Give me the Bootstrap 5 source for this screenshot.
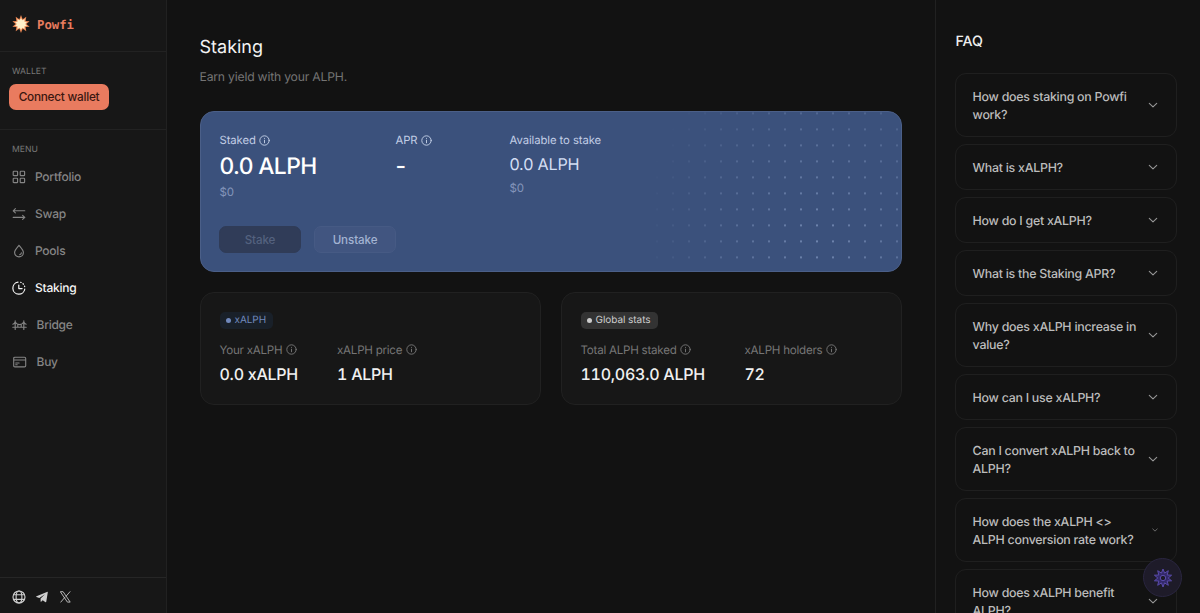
<!DOCTYPE html>
<html lang="en">
<head>
<meta charset="utf-8">
<title>Powfi – Staking</title>
<meta name="viewport" content="width=device-width, initial-scale=1">
<link rel="stylesheet" href="https://cdn.jsdelivr.net/npm/bootstrap@5.3.0/dist/css/bootstrap.min.css">
<style>
body{font-family:Inter,"Liberation Sans",sans-serif;font-size:12.4px;line-height:18px;background:#121212;color:#e8e8e8;text-rendering:geometricPrecision}
h1,h2,p{margin:0}
svg{display:block;flex:none}
.ln{fill:none;stroke:currentColor;stroke-linecap:round;stroke-linejoin:round}
.side{width:167px;flex:none;background:#171717;border-right:1px solid #212121}
.brand{height:51.5px;border-bottom:1px solid #222;padding:0 0 2px 12px;gap:7px;font:700 12.3px/18px "DejaVu Sans Mono","Liberation Mono",monospace;color:#e87c5f}
.brand span{padding-top:2px}
.wallet{height:78.5px;border-bottom:1px solid #222;padding:14px 0 0 9px}
.cap{font-size:8.6px;line-height:12px;letter-spacing:.05px;color:#777;margin-left:3px}
.btn-connect{width:100px;height:26px;padding:0;border:0;border-radius:7px;background:#e97b5f;color:#3a1710;font-size:11.8px;letter-spacing:-.25px;font-weight:500;margin-top:6.5px;display:block;line-height:26px}
.menu{padding:14.4px 0 0 9px}
.menu .cap{margin-bottom:2.6px}
.item{height:36.85px;gap:9px;padding-left:3px;color:#858585;font-weight:500;font-size:12px;letter-spacing:-.25px}
.item.on{color:#f5f5f5}
.item.wide span{margin-left:1.5px}
.foot{height:36px;border-top:1px solid #262626;padding:3px 0 0 12px;gap:8px;color:#cfcfcf}
.main{width:768px;flex:none;padding:35px 33.5px 0 32.5px}
.ttl{font-size:18px;line-height:24px;font-weight:400;color:#f4f4f4;padding-top:1px}
.sub{color:#747474;margin-top:8px;font-size:12.2px;letter-spacing:-.2px}
.hero{height:161px;margin-top:25px;border:1px solid #4b5f88;border-radius:14px;background:#3b517c;padding:19px 19px 18px;overflow:hidden;position:relative}
.dots{position:absolute;right:0;top:0;width:270px;height:159px;
 background-image:radial-gradient(circle,#92a7cf 0,#92a7cf .7px,transparent 1.5px);background-size:16px 16px;background-position:2px 9.4px;
 -webkit-mask-image:radial-gradient(ellipse 180px 205px at 190px 125px,rgba(0,0,0,.62),rgba(0,0,0,.3) 55%,transparent);mask-image:radial-gradient(ellipse 180px 205px at 190px 125px,rgba(0,0,0,.62),rgba(0,0,0,.3) 55%,transparent)}
.lab{font-size:11.3px;gap:3px;color:#c1cde5;letter-spacing:-.08px}
.big{font-size:22.8px;line-height:28px;font-weight:500;color:#fff;margin-top:4px;letter-spacing:-.6px}
.mid{font-size:16.2px;line-height:22px;color:#d3def3;margin-top:4px;letter-spacing:-.2px}
.usd{font-size:11.5px;line-height:16px;color:#8495bb;margin-top:3px;letter-spacing:-.2px}
.hbtn{width:82px;height:27px;border-radius:7px;padding:1px 0 0;font-size:11.6px;font-weight:500;line-height:25px;border:1px solid #45598a;letter-spacing:-.1px}
.stake{background:#303c58;border-color:#303c58;color:#54627f}
.unstake{background:#415580;border-color:#465a84;color:#a3b3d2}
.panel{flex:1;height:113.4px;border:1px solid #212121;border-radius:14px;background:#171717;padding:18.5px 19px}
.pill{height:17px;border-radius:5px;font-size:10px;line-height:17px;padding:0 7px 0 6px;gap:4px;letter-spacing:-.05px}
.pill i{width:5px;height:5px;border-radius:50%;background:currentColor}
.pill.blue{background:#192029;color:#7088bc}
.pill.gray{background:#333;color:#ccc}
.plab{font-size:11.6px;color:#757575;gap:4px;margin-top:12px;letter-spacing:-.25px}
.val{font-size:16px;line-height:22px;font-weight:500;color:#f0f0f0;margin-top:4px;font-variant-numeric:tabular-nums;letter-spacing:-.26px}
.faq{flex:1;border-left:1px solid #212121;padding:33px 23px 0 19px;overflow:hidden;height:613px}
.fttl{font-size:14.2px;line-height:20px;font-weight:500;color:#eee;margin:-.6px 0 20.6px .5px}
.q{border:1px solid #1f1f1f;border-radius:11px;padding:14px 18px 12px 16.6px;margin-bottom:7px;color:#bcbcbc;font-weight:500;letter-spacing:-.26px}
.q svg{color:#969696;margin-top:-1.4px}
.fab{position:fixed;left:1143px;top:558px;width:39px;height:39px;border-radius:50%;background:#1e1b29;border:1px solid #2a2640}
</style>
</head>
<body class="overflow-hidden">
<svg width="0" height="0" class="position-absolute">
 <symbol id="info" viewBox="0 0 11 11"><circle class="ln" cx="5.5" cy="5.5" r="4.7" stroke-width=".95"/><path class="ln" stroke-width=".95" d="M5.5 5.2v2.6M5.5 3.3v.15"/></symbol>
 <symbol id="chev" viewBox="0 0 10 10"><path class="ln" stroke-width="1.1" d="M1.3 3.3 5 6.9l3.7-3.6"/></symbol>
</svg>
<div class="d-flex vh-100">
 <aside class="side d-flex flex-column">
  <div class="brand d-flex align-items-center">
   <svg width="18" height="18" viewBox="-9 -9 18 18"><path fill="#e98754" d="M0-9 1.7-4.8 5.3-7.3 4.6-3 8.6-2.8 5.4 0 8.6 2.8 4.6 3 5.3 7.3 1.7 4.8 0 9-1.7 4.8-5.3 7.3-4.6 3-8.6 2.8-5.4 0-8.6-2.8-4.6-3-5.3-7.3-1.7-4.8Z"/><path fill="#fff1cb" d="M0-6 1.3-3.8 3.6-4.9 3.5-2.3 6-1.9 4.2 0 6 1.9 3.5 2.3 3.6 4.9 1.3 3.8 0 6-1.3 3.8-3.6 4.9-3.5 2.3-6 1.9-4.2 0-6-1.9-3.5-2.3-3.6-4.9-1.3-3.8Z"/></svg>
   <span>Powfi</span>
  </div>
  <div class="wallet">
   <div class="cap">WALLET</div>
   <button class="btn btn-connect">Connect wallet</button>
  </div>
  <nav class="menu flex-grow-1">
   <div class="cap">MENU</div>
   <div class="item d-flex align-items-center"><svg width="14" height="14" viewBox="0 0 14 14"><g class="ln" stroke-width="1.15"><rect x="1.2" y="1.2" width="4.4" height="4.4" rx=".7"/><rect x="8.2" y="1.2" width="4.4" height="4.4" rx=".7"/><rect x="1.2" y="8.2" width="4.4" height="4.4" rx=".7"/><rect x="8.2" y="8.2" width="4.4" height="4.4" rx=".7"/></g></svg><span>Portfolio</span></div>
   <div class="item d-flex align-items-center"><svg width="14" height="14" viewBox="0 0 14 14"><path class="ln" stroke-width="1.1" d="M12.8 3.8H1.2M3.4 1.7 1.2 3.8l2.2 2M1.2 10.4h11.6M10.6 8.3l2.2 2.1-2.2 2"/></svg><span>Swap</span></div>
   <div class="item d-flex align-items-center"><svg width="14" height="14" viewBox="0 0 14 14"><path class="ln" stroke-width="1.15" d="M7 1.3C5.5 3.2 2.6 5.8 2.6 8.5a4.4 4.4 0 0 0 8.8 0C11.4 5.8 8.5 3.2 7 1.3ZM9.4 8.8A2.3 2.3 0 0 1 7.6 10.7"/></svg><span>Pools</span></div>
   <div class="item on d-flex align-items-center"><svg width="14" height="14" viewBox="0 0 14 14"><g class="ln" stroke-width="1.2"><path d="M6 1.2A6 6 0 1 0 12.8 8M6.8 4v3.6h3.3"/><path stroke-dasharray=".6 2.2" d="M8.6 1.3A6 6 0 0 1 12.8 6.3"/></g></svg><span>Staking</span></div>
   <div class="item wide d-flex align-items-center"><svg width="15" height="14" viewBox="0 0 15 14"><path class="ln" stroke-width="1.15" d="M.8 9.2h13.4M3.2 2.8v8.7M11.8 2.8v8.7M.8 6.2Q2.5 5.8 3.2 4q1.4 2.6 4.3 2.6T11.8 4q.7 1.8 2.4 2.2M5.8 6.5v2.7M9.2 6.5v2.7"/></svg><span style="margin-left:.5px">Bridge</span></div>
   <div class="item wide d-flex align-items-center"><svg width="15" height="14" viewBox="0 0 14 14"><path class="ln" stroke-width="1.1" d="M2.4 2.2h9.6q1.2 0 1.2 1.2v7.3q0 1.2-1.2 1.2H2.4q-1.2 0-1.2-1.2V3.4q0-1.2 1.2-1.2ZM1.2 5h12M3.2 9.7h1.5M3.2 8h3.4"/></svg><span style="margin-left:.5px">Buy</span></div>
  </nav>
  <div class="foot d-flex align-items-center">
   <svg width="14" height="14" viewBox="0 0 14 14"><g class="ln" stroke-width="1.15"><circle cx="7" cy="7" r="6"/><ellipse cx="7" cy="7" rx="2.9" ry="6"/><path d="M1.7 4.7h10.6M1.7 9.3h10.6"/></g></svg>
   <svg style="margin-left:1.5px" width="12" height="12" viewBox="0 0 12 12"><path fill="currentColor" d="M11.5.8.5 5.3q-.7.4 0 .7l2.8.9L9 3.2 4.6 7.4v3.1q.3.4.8 0l1.3-1.3 2.5 1.9q.9.5 1.1-.5l1.5-9.3q0-.7-.3-.5Z"/></svg>
   <svg class="ms-1" width="11" height="12" viewBox="0 0 11 12"><path class="ln" stroke-width=".85" d="M.7.7h2.4l7.1 10.4H7.8ZM10 .7 6.1 5.2M.8 11.1l4-4.7"/></svg>
  </div>
 </aside>

 <main class="main">
  <h1 class="ttl">Staking</h1>
  <p class="sub">Earn yield with your ALPH.</p>
  <section class="hero d-flex flex-column justify-content-between">
   <div class="dots"></div>
   <div class="d-flex position-relative">
    <div style="width:176px"><div class="lab d-flex align-items-center">Staked <svg width="11" height="11"><use href="#info"/></svg></div><div class="big">0.0 ALPH</div><div class="usd">$0</div></div>
    <div style="width:114px"><div class="lab d-flex align-items-center">APR <svg width="11" height="11"><use href="#info"/></svg></div><div class="big">-</div></div>
    <div><div class="lab">Available to stake</div><div class="mid">0.0 ALPH</div><div class="usd" style="margin-top:5px">$0</div></div>
   </div>
   <div class="d-flex position-relative" style="gap:13px;margin-left:-.5px"><button class="btn hbtn stake">Stake</button><button class="btn hbtn unstake">Unstake</button></div>
  </section>
  <div class="d-flex" style="gap:20px;margin-top:20px">
   <section class="panel">
    <div class="d-flex"><span class="pill blue d-flex align-items-center"><i></i>xALPH</span></div>
    <div class="d-flex">
     <div style="width:117.5px"><div class="plab d-flex align-items-center">Your xALPH <svg width="11" height="11"><use href="#info"/></svg></div><div class="val">0.0 xALPH</div></div>
     <div><div class="plab d-flex align-items-center">xALPH price <svg width="11" height="11"><use href="#info"/></svg></div><div class="val">1 ALPH</div></div>
    </div>
   </section>
   <section class="panel">
    <div class="d-flex"><span class="pill gray d-flex align-items-center"><i></i>Global stats</span></div>
    <div class="d-flex">
     <div style="width:164px"><div class="plab d-flex align-items-center">Total ALPH staked <svg width="11" height="11"><use href="#info"/></svg></div><div class="val">110,063.0 ALPH</div></div>
     <div><div class="plab d-flex align-items-center">xALPH holders <svg width="11" height="11"><use href="#info"/></svg></div><div class="val">72</div></div>
    </div>
   </section>
  </div>
 </main>

 <aside class="faq">
  <h2 class="fttl">FAQ</h2>
  <div class="q d-flex align-items-center justify-content-between"><span>How does staking on Powfi<br>work?</span><svg width="10" height="10"><use href="#chev"/></svg></div>
  <div class="q d-flex align-items-center justify-content-between"><span>What is xALPH?</span><svg width="10" height="10"><use href="#chev"/></svg></div>
  <div class="q d-flex align-items-center justify-content-between"><span>How do I get xALPH?</span><svg width="10" height="10"><use href="#chev"/></svg></div>
  <div class="q d-flex align-items-center justify-content-between"><span>What is the Staking APR?</span><svg width="10" height="10"><use href="#chev"/></svg></div>
  <div class="q d-flex align-items-center justify-content-between"><span class="text-nowrap">Why does xALPH increase in<br>value?</span><svg width="10" height="10"><use href="#chev"/></svg></div>
  <div class="q d-flex align-items-center justify-content-between"><span>How can I use xALPH?</span><svg width="10" height="10"><use href="#chev"/></svg></div>
  <div class="q d-flex align-items-center justify-content-between"><span class="text-nowrap">Can I convert xALPH back to<br>ALPH?</span><svg width="10" height="10"><use href="#chev"/></svg></div>
  <div class="q d-flex align-items-center justify-content-between"><span class="text-nowrap">How does the xALPH &lt;&gt;<br>ALPH conversion rate work?</span><svg width="6" height="6"><use href="#chev"/></svg></div>
  <div class="q d-flex align-items-center justify-content-between"><span>How does xALPH benefit<br>ALPH?</span><svg width="10" height="10"><use href="#chev"/></svg></div>
 </aside>
</div>
<div class="fab d-flex align-items-center justify-content-center">
 <svg width="20" height="20" viewBox="-10 -10 20 20"><g fill="none" stroke="#5a4bab" stroke-width="1" stroke-linejoin="round"><path fill="#33296a" d="M0-9 1.6-4.9 5.3-7.3 4.2-3 8.6-2.8 5.2 0 8.6 2.8 4.2 3 5.3 7.3 1.6 4.9 0 9-1.6 4.9-5.3 7.3-4.2 3-8.6 2.8-5.2 0-8.6-2.8-4.2-3-5.3-7.3-1.6-4.9Z"/><circle r="2.7" fill="#1e1b29"/></g></svg>
</div>
<script src="https://cdn.jsdelivr.net/npm/bootstrap@5.3.0/dist/js/bootstrap.bundle.min.js"></script>
</body>
</html>
